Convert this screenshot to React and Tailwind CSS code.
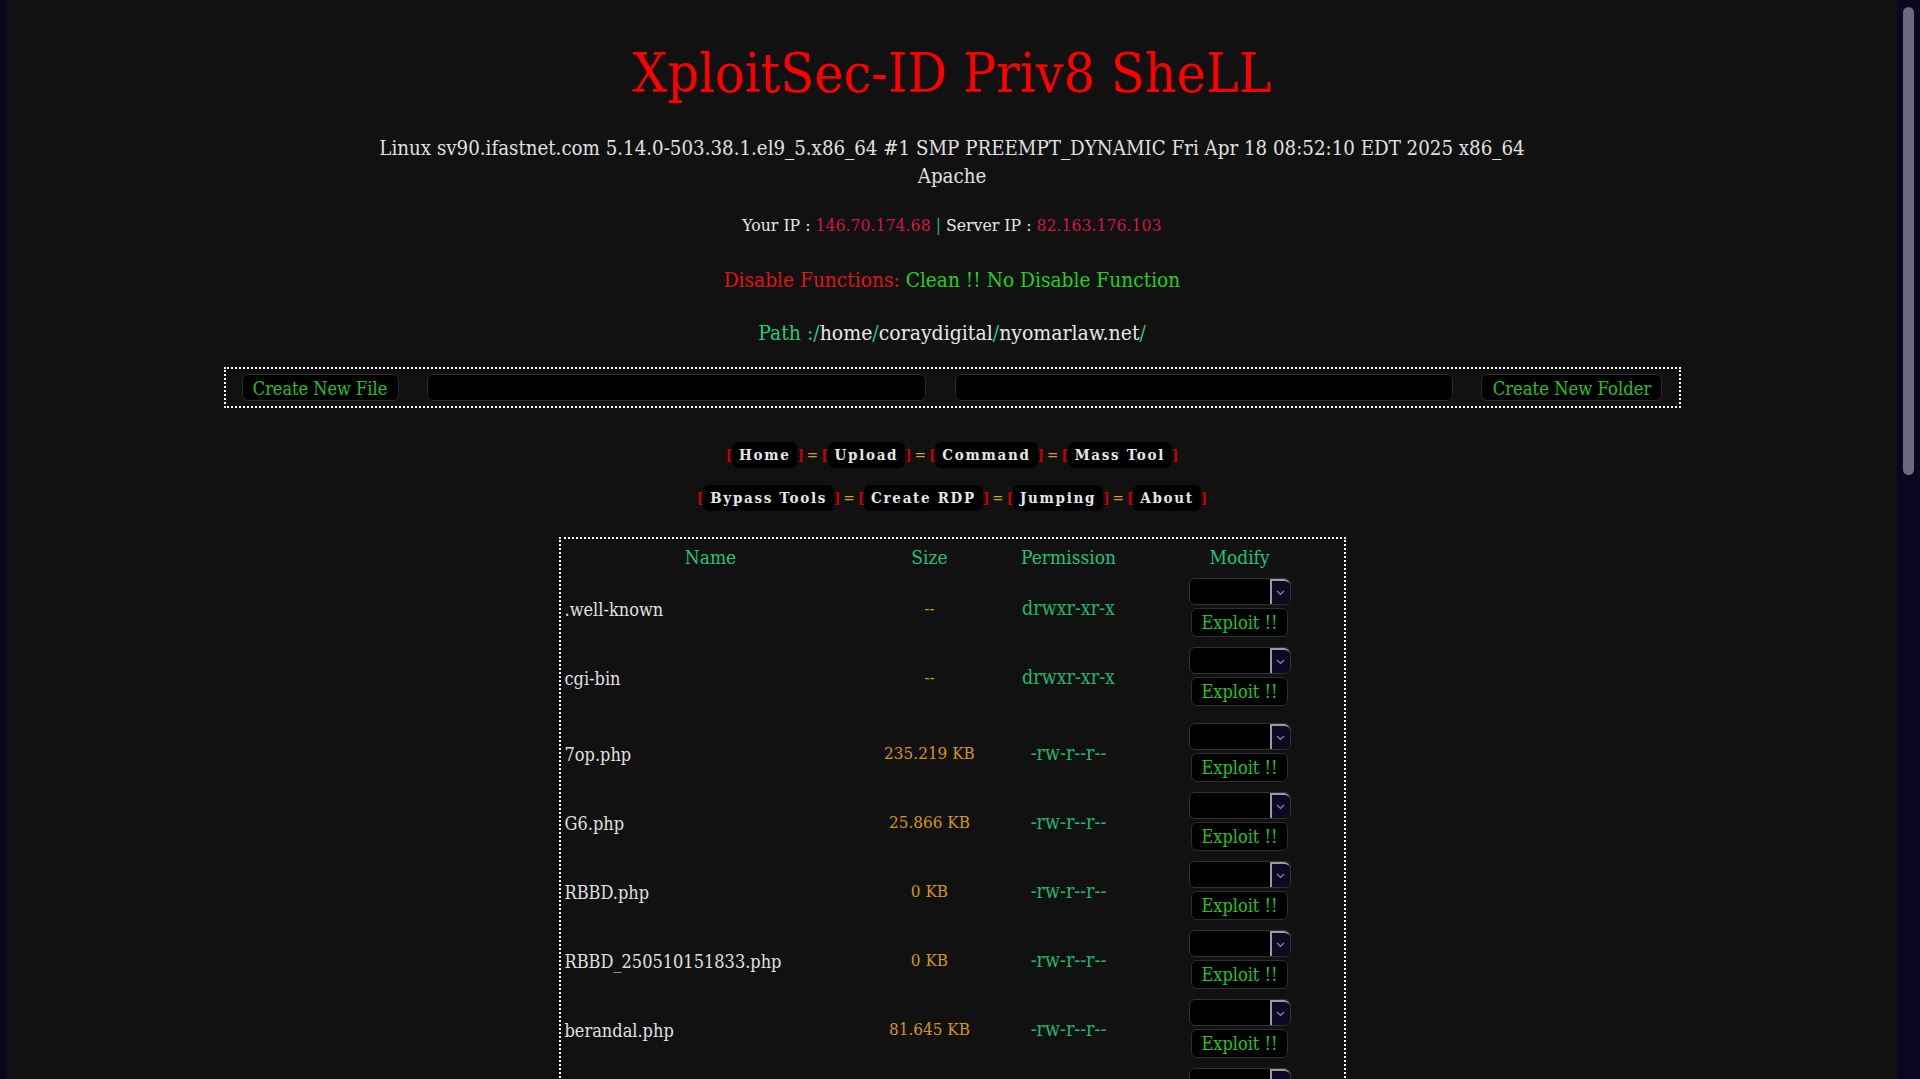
import React from "react";

const font = { fontFamily: '"DejaVu Serif Condensed", "DejaVu Serif", serif' };

const files = [
  { name: ".well-known", size: "--", perm: "drwxr-xr-x", dir: true },
  { name: "cgi-bin", size: "--", perm: "drwxr-xr-x", dir: true },
  { name: "7op.php", size: "235.219 KB", perm: "-rw-r--r--" },
  { name: "G6.php", size: "25.866 KB", perm: "-rw-r--r--" },
  { name: "RBBD.php", size: "0 KB", perm: "-rw-r--r--" },
  { name: "RBBD_250510151833.php", size: "0 KB", perm: "-rw-r--r--" },
  { name: "berandal.php", size: "81.645 KB", perm: "-rw-r--r--" },
  // next row is scrolled below the fold, only its dropdown peeks in
  { name: "", size: "", perm: "" },
];

const menu1 = ["Home", "Upload", "Command", "Mass Tool"];
const menu2 = ["Bypass Tools", "Create RDP", "Jumping", "About"];

const Nav = ({ items }) => (
  <div className="flex items-center text-[15px]">
    {items.map((item, i) => (
      <React.Fragment key={item}>
        {i > 0 && <span className="text-[#c9a227] px-[3px]">=</span>}
        <span className="text-[#c40000] font-bold">[</span>
        <span className="bg-black rounded-md px-[7px] h-[26px] flex items-center text-[#e6e6e6] tracking-[1.7px] font-bold">
          {item}
        </span>
        <span className="text-[#c40000] font-bold">]</span>
      </React.Fragment>
    ))}
  </div>
);

const Dropdown = () => (
  <div className="w-[102px] h-[27px] bg-black border border-[#333] rounded-md flex justify-end overflow-hidden">
    <div className="w-[20px] h-full bg-[#0b0a22] border-l-2 border-t-2 border-[#9a9aa6] rounded-tr-md flex items-center justify-center">
      <svg width="9" height="6" viewBox="0 0 9 6" fill="none">
        <path d="M1 1l3.5 3.5L8 1" stroke="#8a8a9a" strokeWidth="1.2" />
      </svg>
    </div>
  </div>
);

export default function App() {
  return (
    <div className="h-screen overflow-hidden flex bg-[#111111]" style={font}>
      <div className="w-[7px] bg-[#07061a] shrink-0" />
      <main className="flex-1 flex flex-col items-center *:shrink-0">
        <h1 className="mt-[41px] text-[55px] leading-[64px] text-[#ff0000]">
          XploitSec-ID Priv8 SheLL
        </h1>
        <div className="mt-[29px] text-[20.3px] leading-[28px] text-[#e0e0e0] text-center">
          <div>Linux sv90.ifastnet.com 5.14.0-503.38.1.el9_5.x86_64 #1 SMP PREEMPT_DYNAMIC Fri Apr 18 08:52:10 EDT 2025 x86_64</div>
          <div>Apache</div>
        </div>
        <div className="mt-[23px] text-[17.5px] leading-[24px] text-[#e6e6e6]">
          Your IP : <span className="text-[#cf1740]">146.70.174.68</span>{" "}
          <span className="text-[#1dbf6b]">|</span> Server IP :{" "}
          <span className="text-[#cf1740]">82.163.176.103</span>
        </div>
        <div className="mt-[29px] text-[20.7px] leading-[28px]">
          <span className="text-[#e01414]">Disable Functions: </span>
          <span className="text-[#1fd11f]">Clean !! No Disable Function</span>
        </div>
        <div className="mt-[25px] text-[21px] leading-[28px] text-[#e8e8e8]">
          <span className="text-[#22cc77]">Path :</span>
          <span className="text-[#22cc77]">/</span>home
          <span className="text-[#22cc77]">/</span>coraydigital
          <span className="text-[#22cc77]">/</span>nyomarlaw.net
          <span className="text-[#22cc77]">/</span>
        </div>

        <div className="mt-[20px] w-[1457px] h-[41px] border-2 border-dotted border-white flex items-center justify-between px-4">
          <button className="w-[157px] h-[27px] bg-black border border-[#2a2a2a] rounded-md text-[#22c422] text-[18px]">
            Create New File
          </button>
          <input className="w-[499px] h-[27px] bg-black border border-[#2a2a2a] rounded-md outline-none" />
          <input className="w-[498px] h-[27px] bg-black border border-[#2a2a2a] rounded-md outline-none" />
          <button className="w-[181px] h-[27px] bg-black border border-[#2a2a2a] rounded-md text-[#22c422] text-[18.3px]">
            Create New Folder
          </button>
        </div>

        <div className="mt-[34px] flex flex-col items-center gap-[17px]">
          <Nav items={menu1} />
          <Nav items={menu2} />
        </div>

        <div className="mt-[26px] w-[787px] border-2 border-dotted border-white pt-[4px] px-[2px]">
          <div className="grid grid-cols-[296px_142px_136px_206px] text-[19px] leading-[28px] text-[#1fc47a] text-center">
            <div>Name</div>
            <div>Size</div>
            <div>Permission</div>
            <div>Modify</div>
          </div>
          {files.map((f, i) => (
            <div
              key={i}
              className={`grid grid-cols-[296px_142px_136px_206px] items-center py-[5px] ${i === 2 ? "mt-[7px]" : ""} ${i === 0 ? "mt-[2px]" : ""}`}
            >
              <div className="text-[#e0e0e0] pl-[2px] pt-[3px] text-[18px]">{f.name}</div>
              <div className="text-center pt-[3px] text-[#d4941c] text-[17px]">{f.size}</div>
              <div className="text-center pt-[3px] text-[#1db86a] text-[19.5px]">{f.perm}</div>
              <div className="flex flex-col items-center gap-[3px]">
                <Dropdown />
                <button className="w-[97px] h-[29px] bg-black border border-[#2e2e2e] rounded-md text-[#22c422] text-[18px]">
                  Exploit !!
                </button>
              </div>
            </div>
          ))}
        </div>
      </main>
      <div className="w-[23px] bg-[#0a0820] shrink-0 pt-[7px] flex justify-center">
        <div className="w-[11px] h-[468px] rounded-full bg-[#6b6880]" />
      </div>
    </div>
  );
}
